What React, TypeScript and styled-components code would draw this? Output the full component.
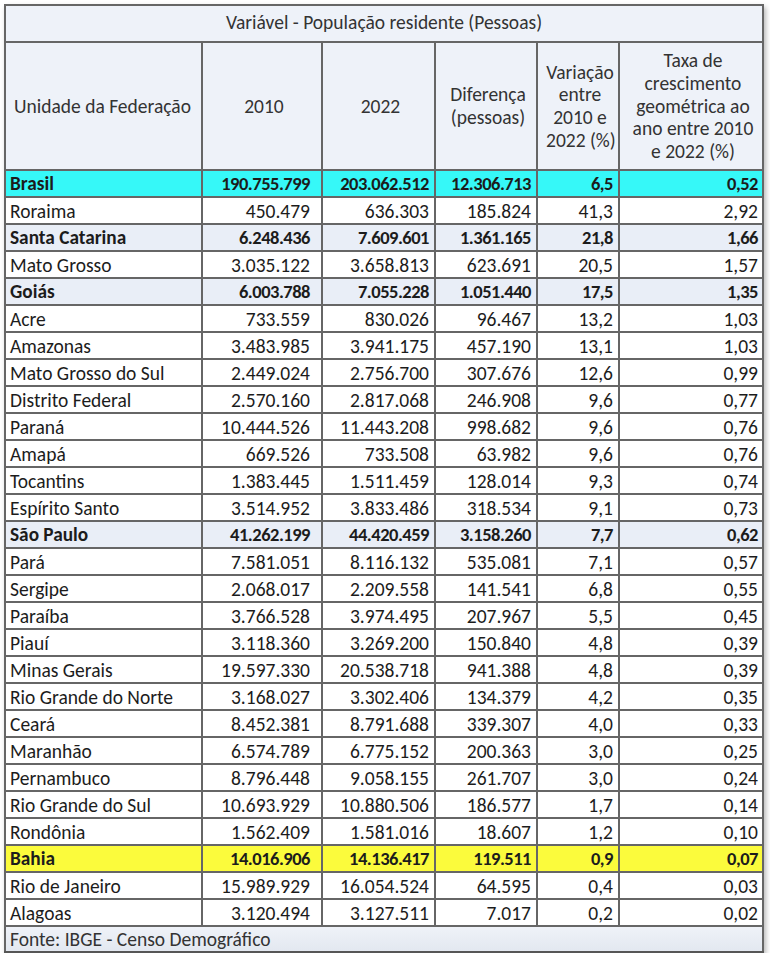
import React from "react";
import styled, { createGlobalStyle } from "styled-components";

const Global = createGlobalStyle`
  html, body { margin: 0; padding: 0; background: #ffffff; }
  body { font-family: "Carlito", "Lato", "Liberation Sans", sans-serif; }
`;

const Page = styled.div`
  padding: 4px 0 0 4px;
  width: 770px;
  box-sizing: border-box;
`;

const Table = styled.table`
  width: 760px;
  table-layout: fixed;
  border-collapse: collapse;
  border: 2px solid #565656;
  box-shadow: 2px 3px 5px rgba(0, 0, 0, 0.28);
  font-size: 19.5px;
  color: #1c1c1c;
`;

const TitleCell = styled.th`
  height: 32px;
  padding: 0 0 3px;
  font-weight: 400;
  text-align: center;
  color: #333;
  background: #eef2f9;
  border: 2px solid #666;
`;

const HeadCell = styled.th<{ $align?: string }>`
  height: 126px;
  padding: 0 4px 0 8px;
  font-weight: 400;
  line-height: 22.7px;
  white-space: nowrap;
  text-align: ${(p) => p.$align || "center"};
  vertical-align: middle;
  color: #333;
  background: #eef2f9;
  border: 2px solid #666;
`;

type Tone = "plain" | "bold" | "cyan" | "yellow";

const bgFor: Record<Tone, string> = {
  plain: "#ffffff",
  bold: "#e9eef7",
  cyan: "#36f8f8",
  yellow: "#fbfb3c",
};

const Row = styled.tr<{ $tone: Tone }>`
  background: ${(p) => bgFor[p.$tone]};
  font-weight: ${(p) => (p.$tone === "plain" ? 400 : 700)};
`;

const NameCell = styled.td<{ $bold: boolean }>`
  height: 25px;
  padding: 0 4px;
  font-size: ${(p) => (p.$bold ? "19.3px" : "19.5px")};
  text-align: left;
  white-space: nowrap;
  border: 2px solid #666;
`;

const NumCell = styled.td<{ $pad: number; $bold: boolean }>`
  height: 25px;
  padding: 0 ${(p) => p.$pad}px 0 0;
  font-size: ${(p) => (p.$bold ? "18.5px" : "19.5px")};
  letter-spacing: ${(p) => (p.$bold ? "-0.5px" : "0")};
  text-align: right;
  white-space: nowrap;
  border: 2px solid #666;
`;

const FootCell = styled.td`
  height: 23px;
  padding: 0 4px;
  text-align: left;
  color: #333;
  background: linear-gradient(#eff2f8, #e3e8f0);
  border: 2px solid #666;
  border-bottom-color: #565656;
`;

type R = [string, string, string, string, string, string, Tone?];

const rows: R[] = [
  ["Brasil", "190.755.799", "203.062.512", "12.306.713", "6,5", "0,52", "cyan"],
  ["Roraima", "450.479", "636.303", "185.824", "41,3", "2,92"],
  ["Santa Catarina", "6.248.436", "7.609.601", "1.361.165", "21,8", "1,66", "bold"],
  ["Mato Grosso", "3.035.122", "3.658.813", "623.691", "20,5", "1,57"],
  ["Goiás", "6.003.788", "7.055.228", "1.051.440", "17,5", "1,35", "bold"],
  ["Acre", "733.559", "830.026", "96.467", "13,2", "1,03"],
  ["Amazonas", "3.483.985", "3.941.175", "457.190", "13,1", "1,03"],
  ["Mato Grosso do Sul", "2.449.024", "2.756.700", "307.676", "12,6", "0,99"],
  ["Distrito Federal", "2.570.160", "2.817.068", "246.908", "9,6", "0,77"],
  ["Paraná", "10.444.526", "11.443.208", "998.682", "9,6", "0,76"],
  ["Amapá", "669.526", "733.508", "63.982", "9,6", "0,76"],
  ["Tocantins", "1.383.445", "1.511.459", "128.014", "9,3", "0,74"],
  ["Espírito Santo", "3.514.952", "3.833.486", "318.534", "9,1", "0,73"],
  ["São Paulo", "41.262.199", "44.420.459", "3.158.260", "7,7", "0,62", "bold"],
  ["Pará", "7.581.051", "8.116.132", "535.081", "7,1", "0,57"],
  ["Sergipe", "2.068.017", "2.209.558", "141.541", "6,8", "0,55"],
  ["Paraíba", "3.766.528", "3.974.495", "207.967", "5,5", "0,45"],
  ["Piauí", "3.118.360", "3.269.200", "150.840", "4,8", "0,39"],
  ["Minas Gerais", "19.597.330", "20.538.718", "941.388", "4,8", "0,39"],
  ["Rio Grande do Norte", "3.168.027", "3.302.406", "134.379", "4,2", "0,35"],
  ["Ceará", "8.452.381", "8.791.688", "339.307", "4,0", "0,33"],
  ["Maranhão", "6.574.789", "6.775.152", "200.363", "3,0", "0,25"],
  ["Pernambuco", "8.796.448", "9.058.155", "261.707", "3,0", "0,24"],
  ["Rio Grande do Sul", "10.693.929", "10.880.506", "186.577", "1,7", "0,14"],
  ["Rondônia", "1.562.409", "1.581.016", "18.607", "1,2", "0,10"],
  ["Bahia", "14.016.906", "14.136.417", "119.511", "0,9", "0,07", "yellow"],
  ["Rio de Janeiro", "15.989.929", "16.054.524", "64.595", "0,4", "0,03"],
  ["Alagoas", "3.120.494", "3.127.511", "7.017", "0,2", "0,02"],
];

const widths = [197, 120, 113, 102, 82, 144];
const pads = [11, 5, 5, 5, 4];

export default function App() {
  return (
    <>
      <Global />
      <Page>
        <Table>
          <colgroup>
            {widths.map((w, i) => (
              <col key={i} style={{ width: w }} />
            ))}
          </colgroup>
          <thead>
            <tr>
              <TitleCell colSpan={6}>Variável - População residente (Pessoas)</TitleCell>
            </tr>
            <tr>
              <HeadCell $align="left">Unidade da Federação</HeadCell>
              <HeadCell>2010</HeadCell>
              <HeadCell>2022</HeadCell>
              <HeadCell>
                Diferença
                <br />
                (pessoas)
              </HeadCell>
              <HeadCell>
                Variação
                <br />
                entre
                <br />
                2010 e
                <br />
                2022 (%)
              </HeadCell>
              <HeadCell>
                Taxa de
                <br />
                crescimento
                <br />
                geométrica ao
                <br />
                ano entre 2010
                <br />e 2022 (%)
              </HeadCell>
            </tr>
          </thead>
          <tbody>
            {rows.map((r) => {
              const tone = r[6] || "plain";
              const bold = tone !== "plain";
              return (
                <Row key={r[0]} $tone={tone}>
                  <NameCell $bold={bold}>{r[0]}</NameCell>
                  {r.slice(1, 6).map((v, i) => (
                    <NumCell key={i} $pad={pads[i]} $bold={bold}>
                      {v}
                    </NumCell>
                  ))}
                </Row>
              );
            })}
          </tbody>
          <tfoot>
            <tr>
              <FootCell colSpan={6}>Fonte: IBGE - Censo Demográfico</FootCell>
            </tr>
          </tfoot>
        </Table>
      </Page>
    </>
  );
}
